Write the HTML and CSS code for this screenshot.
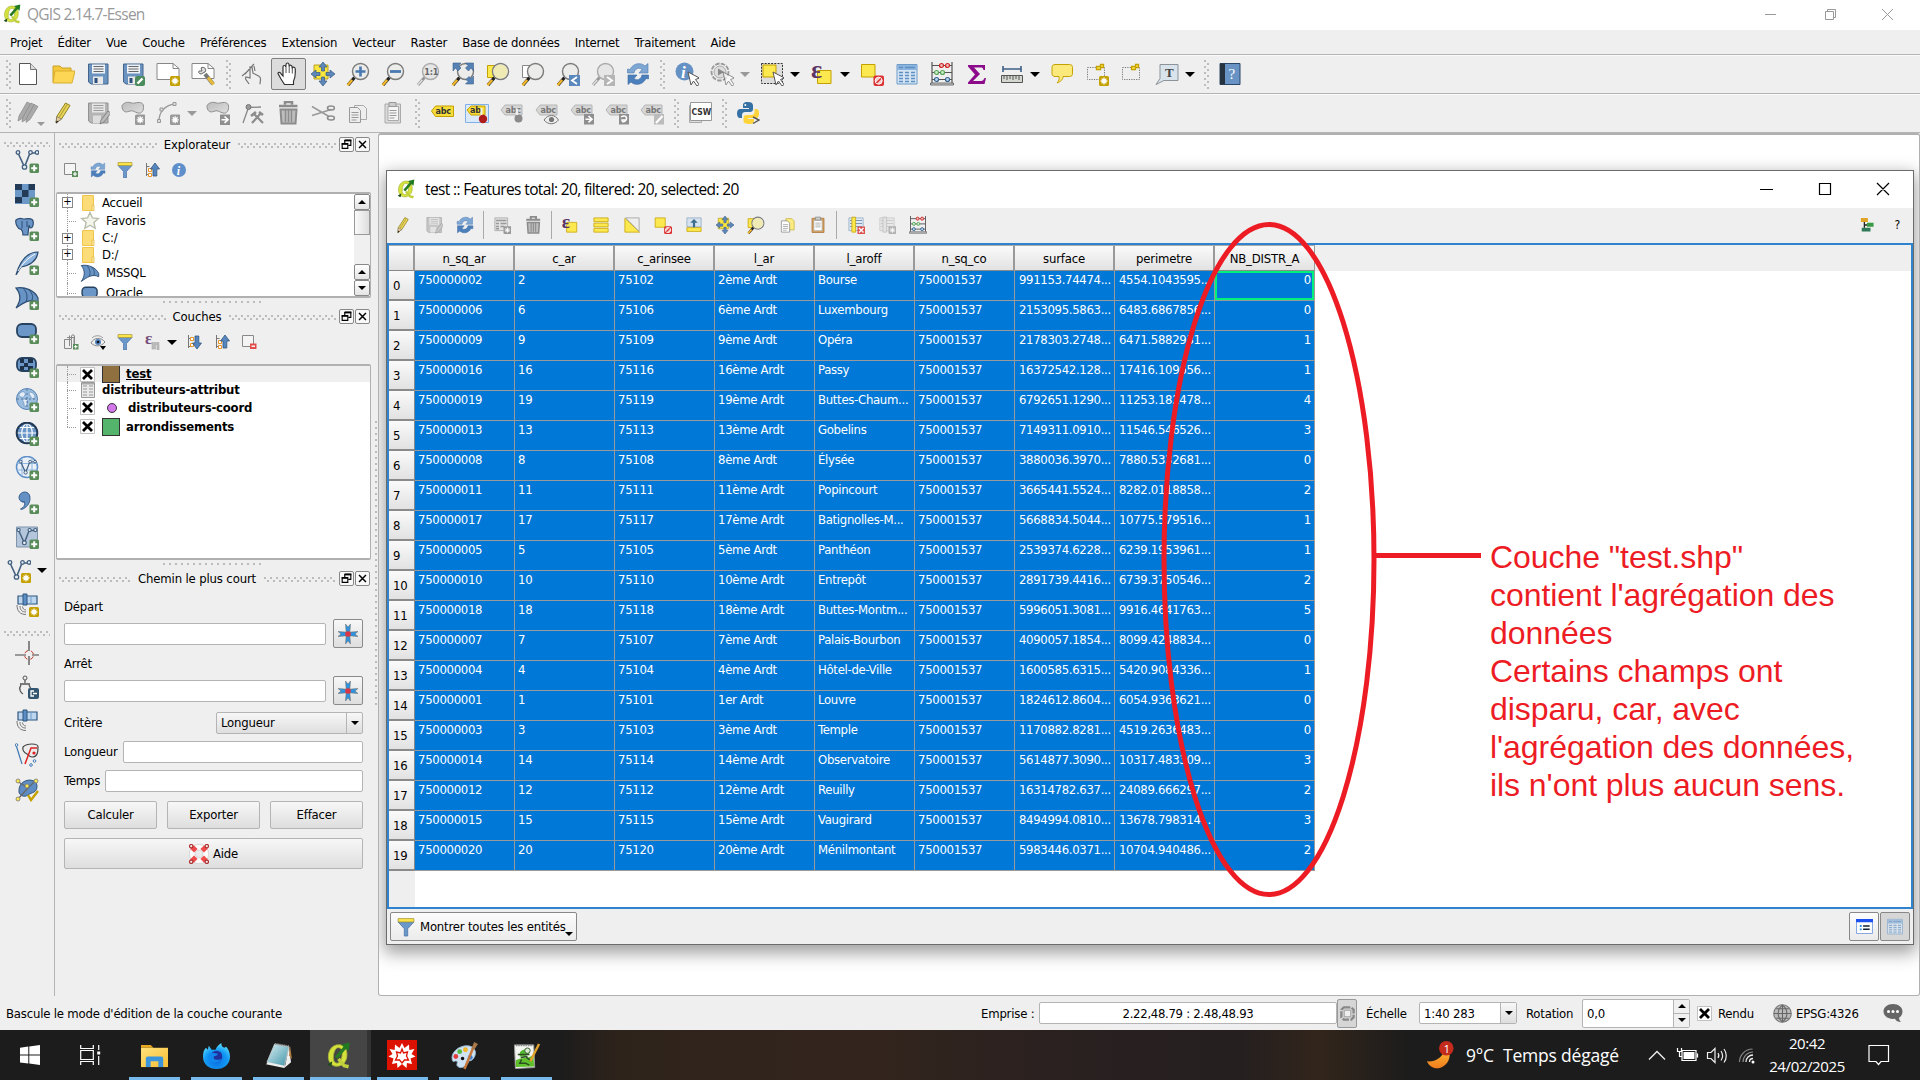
FILE: index.html
```html
<!DOCTYPE html>
<html lang="fr">
<head>
<meta charset="utf-8">
<title>QGIS 2.14.7-Essen</title>
<link rel="stylesheet" href="styles.css">
</head>
<body>
<svg class="defs" width="0" height="0">
<defs>
<linearGradient id="gGrey" x1="0" y1="0" x2="1" y2="1"><stop offset="0" stop-color="#bcbcbc"/><stop offset="1" stop-color="#dedede"/></linearGradient>
<linearGradient id="gMoon" x1="0" y1="0" x2="0" y2="1"><stop offset="0" stop-color="#ffc83d"/><stop offset="1" stop-color="#f07c1c"/></linearGradient>
<linearGradient id="gFold" x1="0" y1="0" x2="1" y2="1"><stop offset="0" stop-color="#ffe17a"/><stop offset="1" stop-color="#fbbf35"/></linearGradient>
<radialGradient id="gFox" cx=".5" cy=".7" r=".7"><stop offset="0" stop-color="#0b6fe0"/><stop offset=".6" stop-color="#139bf5"/><stop offset="1" stop-color="#5fe0ff"/></radialGradient>
<linearGradient id="gNote" x1="0" y1="0" x2="1" y2="1"><stop offset="0" stop-color="#d9f0f5"/><stop offset="1" stop-color="#3f93a6"/></linearGradient>
<g id="b-plus"><rect x="14.5" y="14.5" width="9.5" height="9.5" rx="1.5" fill="#5a8c5a"/><path d="M19.2 16.3v6M16.2 19.3h6" stroke="#fff" stroke-width="2"/></g>
<g id="b-new"><rect x="14" y="14" width="10" height="10" rx="1.5" fill="#c4a000"/><path d="M19 15.6v6.8M15.6 19h6.8M16.6 16.6l4.8 4.8M21.4 16.6l-4.8 4.8" stroke="#fff" stroke-width="1.3"/></g>
<g id="b-newg"><rect x="14" y="13.500" width="10.500" height="10.500" rx="1.500" fill="#999"/><path d="M19.200 15.300v7M15.700 18.800h7M16.700 16.300l5 5M21.700 16.300l-5 5" stroke="#fff" stroke-width="1.300"/></g>
<g id="b-no"><rect x="13.500" y="13.500" width="10.500" height="10.500" rx="2" fill="#dc3030"/><circle cx="18.700" cy="18.700" r="3.500" fill="#f4caca" stroke="#fff"/><path d="M16.500 21l4.500-4.500" stroke="#dc3030" stroke-width="1.500"/></g>
<g id="lens"><path d="M8.500 15.500L2 23" stroke="#222" stroke-width="3.200"/><path d="M6.200 18L1.500 23.200" stroke="#f3b92c" stroke-width="2.400"/><circle cx="14.500" cy="9.500" r="8" fill="#ececea" stroke="#7b7b7b" stroke-width="1.400"/></g>
<g id="lensg"><path d="M8.500 15.500L2 23" stroke="#999" stroke-width="3"/><path d="M6.200 18L1.700 23" stroke="#ddd" stroke-width="1.600"/><circle cx="14.500" cy="9.500" r="8" fill="#e6e6e6" stroke="#aaa" stroke-width="1.400"/></g>
<g id="tagg"><path d="M1 9l4-5h17v10H5z" fill="#d6d6d6" stroke="#b5b5b5"/><text x="5.500" y="12" class="abc" fill="#777">abc</text></g>
<g id="vee"><path d="M3 4l6.500 14L15 4h8" fill="none" stroke="#43607f" stroke-width="1.600"/><g fill="#e9eef4" stroke="#43607f" stroke-width="1.300"><circle cx="3" cy="3.500" r="1.800"/><circle cx="9.500" cy="18" r="2.200"/><circle cx="15.500" cy="3.500" r="1.800"/><circle cx="22" cy="3.500" r="1.800"/></g></g>
<g id="arrow"><path d="M13 10l3 13 2.500-4 3.500 5 2-1.500-3.500-5 4-1.500z" fill="#fff" stroke="#555"/></g>
<symbol id="qgis" viewBox="0 0 24 24"><path d="M13 2.500C6 2 3 8 3 13s3 8.500 7.500 8.500c5 0 9-4 9-10S17 3 13 2.500zM12 5c3 .3 3.500 3 3.200 7-.5 4-2 6.800-4.500 6.800C8 18.500 7 16 7.500 12 8 8 9.500 5 12 5z" fill="#d5e23c" stroke="#a9b43a" stroke-width=".8"/><path d="M12 15l5 6 4 1" stroke="#c2cf3c" stroke-width="3" fill="none"/><path d="M10 14L19 3.500" stroke="#2a7c22" stroke-width="3"/><path d="M14.500 2.500L22 .5l-1 7.500z" fill="#1f7a20"/><path d="M2 20l4.500-3-1 5z" fill="#1d4b1c"/></symbol>
<symbol id="file" viewBox="0 0 24 24"><path d="M3.500 1.500h11l6 6v15h-17z" fill="#fff" stroke="#555"/><path d="M14.500 1.500v6h6" fill="#ddd" stroke="#777"/></symbol>
<symbol id="open" viewBox="0 0 24 24"><path d="M2 20V4h7l2 2h9v4" fill="#f5c83c" stroke="#c9a024"/><path d="M2 21L4 9h20l-3 12z" fill="#fcd654" stroke="#d9ae30"/></symbol>
<symbol id="save" viewBox="0 0 24 24"><path d="M2.500 2h19.500v20H5l-2.500-2z" fill="#6b93c0" stroke="#44648c"/><path d="M6 2.500h13v9H6z" fill="#eef1f5"/><path d="M7.500 4.500h10M7.500 7h10M7.500 9.500h10" stroke="#666"/><path d="M7 14.500h10V22H7z" fill="#e8e8e8"/><path d="M8.500 16h3v5h-3z" fill="#2c4e7d"/></symbol>
<symbol id="saveas" viewBox="0 0 24 24"><use href="#save"/><rect x="14" y="14" width="10" height="10" rx="2" fill="#4c8c5c"/><path d="M16.500 21.500l5-5" stroke="#fff" stroke-width="2.400"/></symbol>
<symbol id="layout" viewBox="0 0 24 24"><path d="M1 1.500h16l6 5v11H1z" fill="#fff" stroke="#888"/><path d="M17 1.500v5h6" fill="none" stroke="#888"/><use href="#b-new"/></symbol>
<symbol id="layoutm" viewBox="0 0 24 24"><path d="M1 1.500h16l6 5v10H1z" fill="#fff" stroke="#888"/><path d="M17 1.500v5h6" fill="none" stroke="#888"/><path d="M10 6c3-2 6 1 4 4l-4 2c-2 0-3-2-2-3l3 0z" fill="#ddd" stroke="#666"/><path d="M14 12l8 10" stroke="#777" stroke-width="4"/><path d="M17 15.500l5.500 7" stroke="#e3b93d" stroke-width="3.200"/></symbol>
<symbol id="touch" viewBox="0 0 24 24"><path d="M8 22c-2-4-5-5-3-7l4 1V5l2 .2 1 6 6 3c3 2 1 4 1 8M4 12L13 2M1 14l6-5M13 4l1 5" fill="none" stroke="#777" stroke-width="1.200"/></symbol>
<symbol id="hand" viewBox="0 0 24 24"><path d="M8.500 22.500L5 17 2 11.500c0-2 2.500-1.500 3.500 1L7 14V5c0-2 2.500-2 2.800 0L10 2.500c.2-2 2.700-2 3 0l.2 2C14 2.500 16 3 16 5l.3 1c1-1.500 3-.8 3 1.200 0 6 .5 7.800-1.800 12v3.300z" fill="#fff" stroke="#333" stroke-width="1.200"/><path d="M10 5v6M13.200 4.500V11M16.300 6v5.500" stroke="#555"/></symbol>
<symbol id="panm" viewBox="0 0 24 24"><path d="M3 3h14v14H3z" fill="#fae63c" stroke="#b8a224"/><path d="M12 0l4 5h-2.500v4h-3V5H8zM12 24l4-5h-2.500v-4h-3v4H8zM0 12l5-4v2.500h4v3H5V16zM24 12l-5-4v2.500h-4v3h4V16z" fill="#5c88bb" stroke="#37597f" stroke-width=".7"/></symbol>
<symbol id="zin" viewBox="0 0 24 24"><use href="#lens"/><path d="M14.500 4.500v10M9.500 9.500h10" stroke="#4a78b0" stroke-width="2.600"/></symbol>
<symbol id="zout" viewBox="0 0 24 24"><use href="#lens"/><path d="M9 9.500h11" stroke="#4a78b0" stroke-width="2.800"/></symbol>
<symbol id="z11" viewBox="0 0 24 24"><use href="#lensg"/><text x="8.300" y="12.800" class="abc" fill="#666">1:1</text></symbol>
<symbol id="zfull" viewBox="0 0 24 24"><use href="#lens"/><path d="M2 1h8L7.500 3.500 10 6 7 9 4.500 6 2 9zM22.500 1h-8L17 3.500 14.500 6l3 3L20 6l2.500 3zM22.500 22h-8l2.500-2.500-2-2 3-3 2 2 2.500-2.500z" fill="#5581b5" stroke="#3e628e" stroke-width=".6"/></symbol>
<symbol id="zsel" viewBox="0 0 24 24"><path d="M1.500 3.500h12v12h-12z" fill="#fce94f" stroke="#c4a000"/><use href="#lens"/><circle cx="14.500" cy="9.500" r="7" fill="#efe9b4"/></symbol>
<symbol id="zlay" viewBox="0 0 24 24"><path d="M1.500 3.500h12v12h-12z" fill="#fff" stroke="#888"/><use href="#lens"/></symbol>
<symbol id="zlast" viewBox="0 0 24 24"><use href="#lens"/><path d="M13 13h11v11H13z" fill="#5b89bd"/><path d="M21 15l-5 3.500 5 3.500" stroke="#fff" stroke-width="1.800" fill="none"/></symbol>
<symbol id="znext" viewBox="0 0 24 24"><use href="#lensg"/><path d="M13 13h11v11H13z" fill="#b5b5b5"/><path d="M16 15l5 3.500-5 3.500" stroke="#fff" stroke-width="1.800" fill="none"/></symbol>
<symbol id="refresh" viewBox="0 0 24 24"><path d="M1.500 11V7l2.500.5C7 1 15 0 19 4l3-2.500V11h-9l3-3.500c-3-2.500-7-1-8 3.500z" fill="#7fa7d4" stroke="#4a78b0" stroke-width=".6"/><path d="M22.500 13v4l-2.500-.5C17 23 9 24 5 20l-3 2.500V13h9l-3 3.500c3 2.500 7 1 8-3.500z" fill="#4b80bd" stroke="#3a68a0" stroke-width=".6"/></symbol>
<symbol id="ident" viewBox="0 0 24 24"><circle cx="9.500" cy="9.500" r="9" fill="#6691c4"/><text x="6" y="16" class="ital" fill="#fff">i</text><use href="#arrow"/></symbol>
<symbol id="action" viewBox="0 0 24 24"><circle cx="10" cy="10" r="8.500" fill="none" stroke="#999" stroke-width="1.800" stroke-dasharray="4.500 1.300"/><circle cx="10" cy="10" r="6" fill="#ddd" stroke="#aaa"/><path d="M8 6.500l6 3.500-6 3.500z" fill="#888"/><g opacity=".6"><use href="#arrow"/></g></symbol>
<symbol id="select" viewBox="0 0 24 24"><path d="M1.500 1.500h21v20h-21z" fill="#ddd" stroke="#333" stroke-dasharray="2 1.200"/><path d="M3 3h13v12H3z" fill="#fce94f" stroke="#c4a000"/><use href="#arrow"/></symbol>
<symbol id="expr" viewBox="0 0 24 24"><path d="M7.500 8.500h13.500v13H7.500z" fill="#fce94f" stroke="#c4a000"/><text x="1" y="15.500" class="eps" fill="#5c3566">ε</text></symbol>
<symbol id="desel" viewBox="0 0 24 24"><path d="M1.500 2.500h13.500v12.500H1.500z" fill="#fce94f" stroke="#c4a000"/><use href="#b-no"/></symbol>
<symbol id="table" viewBox="0 0 24 24"><path d="M2 2.500h20v19.500H2z" fill="#d5e4f3" stroke="#6d9bc8"/><path d="M2 3h20v5H2z" fill="#8db4dc"/><path d="M4 10.500h4M10 10.500h4M16 10.500h4M4 13.500h4M10 13.500h4M16 13.500h4M4 16.500h4M10 16.500h4M16 16.500h4M4 19.500h4M10 19.500h4M16 19.500h4M4 5.500h4M10 5.500h10" stroke="#5c8fc4" stroke-width="1.300"/></symbol>
<symbol id="abacus" viewBox="0 0 24 24"><path d="M2 0v21M22 0v21M2 3.500h20M2 10.500h20M2 17.500h20" stroke="#555" stroke-width="1.200"/><path d="M.5 21h23v2H.5z" fill="#ccc" stroke="#555" stroke-width=".8"/><g stroke-width="1.200"><g fill="#f4b7b7" stroke="#c22"><circle cx="11.500" cy="3.500" r="2"/><circle cx="17.500" cy="3.500" r="2"/></g><g fill="#c9ecc9" stroke="#5aa35a"><circle cx="6.500" cy="10.500" r="2"/><circle cx="12.500" cy="10.500" r="2"/></g><g fill="#bdd7ef" stroke="#37648f"><circle cx="6.500" cy="17.500" r="2"/><circle cx="17.500" cy="17.500" r="2"/></g></g></symbol>
<symbol id="sigma" viewBox="0 0 24 24"><path d="M3 3h17v5h-1.500c-.5-2-1-2.500-3-2.500H9l6 6.500-7 7h8c2 0 2.500-1 3.500-3H21l-1.500 6H3v-1.500l7-8L3 4.500z" fill="#8b0b8b"/></symbol>
<symbol id="ruler" viewBox="0 0 24 24"><path d="M3 7h18M3 4v6M21 4v6" stroke="#3c5f85" stroke-width="1.600"/><path d="M1.500 13.500h21v7h-21z" fill="#d3d7cf" stroke="#555"/><path d="M4 14v3M7 14v4M10 14v3M13 14v4M16 14v3M19 14v4" stroke="#555"/></symbol>
<symbol id="tip" viewBox="0 0 24 24"><path d="M5 2.500h14.500c2 0 3 1 3 3v6c0 2-1 3-3 3H13c0 3-2 5-6 6.500 2-2 2.500-4 2-6.500H5c-2 0-3-1-3-3v-6c0-2 1-3 3-3z" fill="#fbe97c" stroke="#c4a000"/></symbol>
<symbol id="bm" viewBox="0 0 24 24"><path d="M2.500 5.500h17v12h-17z" fill="none" stroke="#777" stroke-dasharray="1.200 1.200"/><path d="M15.500 2.500h3v3h-3v2h-4v-3h4z" fill="#fce94f" stroke="#c4a000" stroke-width="1.300"/></symbol>
<symbol id="bmn" viewBox="0 0 24 24"><use href="#bm"/><use href="#b-new"/></symbol>
<symbol id="ttext" viewBox="0 0 24 24"><path d="M5 2.500h18v16H9L1 22.500l4-6z" fill="#d9e3ec" stroke="#8d9399"/><text x="10" y="15" class="tt" fill="#444">T</text></symbol>
<symbol id="help" viewBox="0 0 24 24"><path d="M2 1.500h20v21H2z" fill="#6893c4" stroke="#2a4668"/><path d="M2 1.500h5v21H2z" fill="#26333f"/><text x="10.500" y="17" class="qm" fill="#fff">?</text></symbol>
<symbol id="pencils" viewBox="0 0 24 24"><g fill="#aaa" stroke="#888" stroke-width=".7"><path d="M2 20l1-5L11 1l4 2-8 14z"/><path d="M6 21l1-5 8-14 4 2-8 14z"/><path d="M10 21.500l1-5 7-13 4 2-8 13z"/></g></symbol>
<symbol id="pencil" viewBox="0 0 24 24"><path d="M5 22l.8-6.500L14.500 2 19 4.500 10.500 18z" fill="#ead75a" stroke="#8d8124"/><path d="M8 16.500L16.500 3" stroke="#b8a53c" stroke-width="1.300"/><path d="M5 22l.8-6.500 4.700 2.500z" fill="#e9c99c" stroke="#666" stroke-width=".6"/><path d="M5 22.500l.5-3 2 1z" fill="#222"/></symbol>
<symbol id="saveg" viewBox="0 0 24 24"><path d="M2.500 2h19.500v20H5l-2.500-2z" fill="#b4b4b4" stroke="#929292"/><path d="M6 2.500h13v9H6z" fill="#e6e6e6"/><path d="M7.500 4.500h10M7.500 7h10M7.500 9.500h10" stroke="#999"/><path d="M7 14.500h8V22H7z" fill="#ddd"/><path d="M14 23l1-4 7-9 3 2-7 9z" fill="#bbb" stroke="#777" stroke-width=".8"/></symbol>
<symbol id="blob" viewBox="0 0 24 24"><path d="M4 2c4-2 6 1 10 0s8-1 8.500 3-1.500 8-5.500 7-5-3-8-2-6 2-7.500-2S2 3 4 2z" fill="url(#gGrey)" stroke="#8e8e8e"/></symbol>
<symbol id="addf" viewBox="0 0 24 24"><use href="#blob"/><use href="#b-newg"/></symbol>
<symbol id="movef" viewBox="0 0 24 24"><use href="#blob"/><path d="M14 13.500h10.500V24H14z" fill="#8f8f8f"/><path d="M15.500 18.700h6M18.500 15.500l3.500 3.200-3.500 3.200" stroke="#fff" stroke-width="1.600" fill="none"/></symbol>
<symbol id="curve" viewBox="0 0 24 24"><path d="M3 20C3 12 8 4 19 3" fill="none" stroke="#999" stroke-width="1.300"/><g fill="#ddd" stroke="#999"><path d="M1.500 18.500h3v3h-3zM4 7h3v3H4zM17 1.500h3v3h-3z"/></g><use href="#b-newg"/></symbol>
<symbol id="node" viewBox="0 0 24 24"><path d="M2 22L7.500 6.500 20 6" fill="none" stroke="#888" stroke-width="1.300"/><circle cx="7.500" cy="6" r="2.500" fill="#999" stroke="#777"/><path d="M11 22l9-10M13 13l9 9" stroke="#8c8c8c" stroke-width="2.200"/><path d="M10 15l5-4M18 11l4 3" stroke="#8c8c8c" stroke-width="2.600"/></symbol>
<symbol id="trash" viewBox="0 0 24 24"><path d="M9 3.500V1h7v2.500M3 5h18.500" stroke="#8c8c8c" stroke-width="2.600" fill="none"/><path d="M4.500 8.500h16l-1 14h-14z" fill="#bdbdbd" stroke="#8c8c8c" stroke-width="2"/><path d="M9.500 9v12M12.500 9v12M15.500 9v12" stroke="#8c8c8c" stroke-width="1.400"/></symbol>
<symbol id="cut" viewBox="0 0 24 24"><path d="M1 5.500l17 10M1 14.500l19-6" stroke="#999" stroke-width="1.500"/><ellipse cx="20" cy="7" rx="3.500" ry="2" fill="none" stroke="#8c8c8c" stroke-width="1.600"/><ellipse cx="20" cy="17" rx="3.500" ry="2" fill="none" stroke="#8c8c8c" stroke-width="1.600"/></symbol>
<symbol id="copy" viewBox="0 0 24 24"><path d="M8.500 4.500h9l3 3v11h-12z" fill="#eee" stroke="#aaa"/><path d="M3.500 6.500h8l3 3v12h-11z" fill="#eee" stroke="#999"/><path d="M5.500 11.500h7M5.500 14h7M5.500 16.500h7M5.500 19h5" stroke="#999"/></symbol>
<symbol id="paste" viewBox="0 0 24 24"><path d="M4 3h15.500v19H4z" fill="#dadada" stroke="#aaa"/><path d="M7 5.500h10.500v14H7z" fill="#f5f5f5" stroke="#aaa"/><path d="M8 1.500h7v4H8z" fill="#ccc" stroke="#999"/><path d="M8.500 9.500h7M8.500 12h7M8.500 14.500h7M8.500 17h5" stroke="#999"/></symbol>
<symbol id="abc" viewBox="0 0 24 24"><path d="M1.500 10l4-5h18v10.500h-18z" fill="#f6dd3a" stroke="#c4a000"/><text x="5.500" y="13.200" class="abc" fill="#333">abc</text></symbol>
<symbol id="abcp" viewBox="0 0 24 24"><path d="M.5 3.500h23v18H.5z" fill="#dce9f8" stroke="#7fb0ea"/><path d="M2 9l4-4h14v9H6z" fill="#f6dd3a" stroke="#c4a000"/><text x="5" y="12.200" class="abc" fill="#333">ab</text><path d="M16.500 7v8" stroke="#eee" stroke-width="2"/><circle cx="18" cy="18" r="4.200" fill="#b01c1c"/></symbol>
<symbol id="tag1" viewBox="0 0 24 24"><use href="#tagg"/><circle cx="18.500" cy="17.500" r="4" fill="#8b8b8b"/><path d="M17 8v6" stroke="#eee" stroke-width="2.500"/></symbol>
<symbol id="tag2" viewBox="0 0 24 24"><use href="#tagg"/><path d="M9 19c4-6 11-6 14.500 0-4 5-10.500 5-14.500 0z" fill="#eee" stroke="#777"/><circle cx="16.500" cy="18.500" r="2.600" fill="#777"/></symbol>
<symbol id="tag3" viewBox="0 0 24 24"><use href="#tagg"/><path d="M14 13h10.500v10.500H14z" fill="#8f8f8f"/><path d="M15.500 18.200h6M18.500 15l3.500 3.200-3.500 3.200" stroke="#fff" stroke-width="1.600" fill="none"/></symbol>
<symbol id="tag4" viewBox="0 0 24 24"><use href="#tagg"/><path d="M14 13h10.500v10.500H14z" fill="#8f8f8f"/><path d="M16 16c3-2 6-1 5.500 2S17 22 17 19h4" stroke="#fff" stroke-width="1.500" fill="none"/></symbol>
<symbol id="tag5" viewBox="0 0 24 24"><use href="#tagg"/><path d="M14 13h10.500v10.500H14z" fill="#bbb"/><path d="M16 22l6.500-7" stroke="#fff" stroke-width="2.200"/></symbol>
<symbol id="csw" viewBox="0 0 24 24"><path d="M1.500 4.500h12v17h-12z" fill="#ddd" stroke="#aaa"/><path d="M2.500 1.500h21v18h-21z" fill="#fff" stroke="#999"/><text x="3.500" y="13.500" class="csw" fill="#333">CSW</text></symbol>
<symbol id="python" viewBox="0 0 24 24"><path d="M12 1c-5 0-5 2-5 3.500V7h6v1H4.500C2 8 1 10 1 12.500S2 17 4 17h2v-3c0-2 1.500-3 3-3h5c2 0 3-1 3-3V4.500C17 2 15 1 12 1z" fill="#3671a5"/><path d="M13 23c5 0 5-2 5-3.500V18h-6v-1h8c3 0 3-2.500 3-5s-1-4-3-4h-1.500v3c0 2-1.500 3-3 3h-5c-2 0-3 1-3 3v3c0 2 2 3 5.500 3z" fill="#ffd43b"/><circle cx="9.300" cy="4" r="1" fill="#fff"/><path d="M17 16l6 3-6 3.500" fill="none" stroke="#555" stroke-width="1.400"/></symbol>
<symbol id="l-vec" viewBox="0 0 24 24"><use href="#vee"/><use href="#b-plus"/></symbol>
<symbol id="l-ras" viewBox="0 0 24 24"><path d="M0 1h20v20H0z" fill="#6c98c8"/><path d="M0 1h7v6H0zM13.500 1H20v6h-6.500zM7 7h6.500v7H7zM0 14h7v6H0z" fill="#243b57"/><use href="#b-plus"/></symbol>
<symbol id="l-pg" viewBox="0 0 24 24"><path d="M1 3c4-3 6-1 8-1s8-2 9 2-1 7-2 7-2-2-2-3c0 4-1 5-1 10H8c0-4-1-5-2-6C3 13 0 6 1 3z" fill="#6a95c6" stroke="#2d4d73" stroke-width="1.200"/><path d="M7 4v7M12 4v6" stroke="#2d4d73"/><use href="#b-plus"/></symbol>
<symbol id="l-fe" viewBox="0 0 24 24"><path d="M1 24C5 10 12 1 23 1c-1 8-6 13-17 15z" fill="#8fb5de" stroke="#2d4d73" stroke-width="1.200"/><path d="M3 20C8 12 13 7 20 3" stroke="#fff" fill="none"/><use href="#b-plus"/></symbol>
<symbol id="sail" viewBox="0 0 24 24"><path d="M1 2c9-2 19 3 22 10v4C15 12 8 17 1 22c5-7 5-14 0-20z" fill="#6793c5" stroke="#2d4d73" stroke-width="1.200"/><path d="M8 2c4 4 5 9 3 14M14 4c4 4 4 7 3 10" stroke="#2d4d73" fill="none"/></symbol>
<symbol id="l-ms" viewBox="0 0 24 24"><use href="#sail"/><use href="#b-plus"/></symbol>
<symbol id="pill" viewBox="0 0 24 24"><rect x="2" y="4" width="19" height="13" rx="5" fill="#6a96c8" stroke="#27425f" stroke-width="1.800"/></symbol>
<symbol id="l-or" viewBox="0 0 24 24"><use href="#pill"/><use href="#b-plus"/></symbol>
<symbol id="l-org" viewBox="0 0 24 24"><use href="#pill"/><path d="M5 5h4v4H5zM13 5h5v4h-5zM9 9h4v4H9zM5 12h4v4H5zM13 12h5v4h-5z" fill="#1f3149"/><use href="#b-plus"/></symbol>
<symbol id="globe" viewBox="0 0 24 24"><circle cx="12" cy="11" r="10.500" fill="#6a96c8" stroke="#27425f"/><path d="M12 .5v21M1.500 11h21M3.500 5.500h17M3.500 16.500h17M12 .5C5 6 5 16 12 21.500M12 .5c7 5.500 7 15.500 0 21" stroke="#fff" fill="none" stroke-width="1.200"/></symbol>
<symbol id="l-wms" viewBox="0 0 24 24"><circle cx="12" cy="11" r="10.500" fill="#9bbde0" stroke="#5683b5"/><path d="M5 5c4-3 6 0 5 2s-2 3-4 2-3-2-1-4zM9 11c4 0 4 2 3 5s-3 3-3 0-3-4 0-5zM15 4c3 0 5 3 5 5s-3 2-4 0-3-4-1-5z" fill="#e4edf6" stroke="#5683b5" stroke-width=".6"/><path d="M2 11h20M12 1v20" stroke="#41628c" stroke-width=".8" stroke-dasharray="2"/><use href="#b-plus"/></symbol>
<symbol id="l-wcs" viewBox="0 0 24 24"><use href="#globe"/><circle cx="12" cy="11" r="10.300" fill="none" stroke="#223a56" stroke-width="2"/><use href="#b-plus"/></symbol>
<symbol id="l-wfs" viewBox="0 0 24 24"><circle cx="12" cy="11" r="10.500" fill="#e9f0f8" stroke="#5d8fc9" stroke-width="1.500"/><path d="M1.500 7.500h21M1.500 14h21M7 2v18M17 2v18" stroke="#8fb4dd"/><g transform="translate(3.500 3) scale(.75)"><use href="#vee"/></g><use href="#b-plus"/></symbol>
<symbol id="l-csv" viewBox="0 0 24 24"><circle cx="9.500" cy="7.500" r="5.500" fill="#6490c4"/><path d="M5.500 19c4-2 4.500-4 4-7.500C6 12 4 10 4 7.500S6.500 2 9.500 2c4 0 5.500 3 5.500 6.500C15 14 11 18 6.500 19.500z" fill="#6490c4" stroke="#3b628f"/><use href="#b-plus"/></symbol>
<symbol id="l-vrt" viewBox="0 0 24 24"><path d="M1.500 2h21v20h-21z" fill="#b3c6dc" stroke="#7f93aa"/><g transform="translate(1 2) scale(.88)"><use href="#vee"/></g><use href="#b-plus"/></symbol>
<symbol id="l-newv" viewBox="0 0 24 24"><use href="#vee"/><use href="#b-new"/></symbol>
<symbol id="sat" viewBox="0 0 24 24"><path d="M3 3h19v8H3z" fill="#bdd6f0" stroke="#2f567f" stroke-width="1.200"/><path d="M16 3v8" stroke="#6f9cc9"/><path d="M8 1h4v11H8z" fill="#5c8dc4" stroke="#2f567f"/><path d="M2 12c0 6 3 9.500 9 9.500M5 13c0 4 2 6 6 6M7.500 13.500c0 2 1.500 3.500 3.500 3.500" fill="none" stroke="#777"/></symbol>
<symbol id="l-gps" viewBox="0 0 24 24"><use href="#sat"/><use href="#b-new"/></symbol>
<symbol id="l-cross" viewBox="0 0 24 24"><path d="M14 0v10M14 15v9M0 14h11M17 14h7" stroke="#444" stroke-width="1.200"/><circle cx="14" cy="14" r="4.500" fill="none" stroke="#c0392b" stroke-dasharray="4 3.070" stroke-dashoffset="-1.500"/></symbol>
<symbol id="l-gc" viewBox="0 0 24 24"><circle cx="10" cy="3" r="2" fill="#eee" stroke="#555"/><path d="M10 5v3M6 10c-3 4 0 8 2 9M14 10l2 4M5 9h10" fill="none" stroke="#555" stroke-width="1.300"/><rect x="13" y="13" width="11" height="11" rx="2" fill="#33556f"/><path d="M19 16h-3v5h3M22 18.500h-4" stroke="#fff" stroke-width="1.300" fill="none"/></symbol>
<symbol id="l-topo" viewBox="0 0 24 24"><path d="M1 2l6 19" stroke="#3f76b5" stroke-width="1.200"/><path d="M8 4c4-4 15-4 15 0s0 10-6 10c-3 0-3-2-5-3s-5-3-4-7z" fill="#ececec" stroke="#444" stroke-width="1.200"/><path d="M10 21l6-16h6" stroke="#d22" fill="none" stroke-width="1.500"/><circle cx="1.500" cy="2" r="1.300" fill="#fff" stroke="#3f76b5"/><circle cx="19" cy="10" r="1.600" fill="#d22"/><circle cx="16" cy="22" r="1.300" fill="#fff" stroke="#3f76b5"/><circle cx="19.500" cy="18" r="1.300" fill="#fff" stroke="#3f76b5"/></symbol>
<symbol id="l-chk" viewBox="0 0 24 24"><path d="M6 6C11 0 22 1 22 8s-5 6-9 9-9 0-9-3 0-5 2-8z" fill="#5f8dc3" stroke="#34587f"/><path d="M2 3l11 7 8-8M13 10L3 21" stroke="#666" stroke-width="1.200" fill="none"/><g fill="#fce94f" stroke="#777" stroke-width=".8"><circle cx="3" cy="3" r="2"/><circle cx="21" cy="3" r="2"/><circle cx="12" cy="8" r="2"/><circle cx="3" cy="21" r="2"/></g><path d="M13 17l3 5 7-9" stroke="#c4a000" stroke-width="2.400" fill="none"/></symbol>
<symbol id="d-add" viewBox="0 0 16 16"><path d="M1.500 1.500h11v11h-11z" fill="#f4f4f4" stroke="#888"/><path d="M9 9h6v6H9z" fill="#5a8c5a"/><path d="M12 10v4M10 12h4" stroke="#fff" stroke-width="1.200"/></symbol>
<symbol id="d-rem" viewBox="0 0 16 16"><path d="M1.500 1.500h11v11h-11z" fill="#f4f4f4" stroke="#888"/><path d="M9 9.500h6.500V15H9z" fill="#e24b4b"/><path d="M10.500 12.200h3.500" stroke="#fff" stroke-width="1.400"/></symbol>
<symbol id="funnel" viewBox="0 0 16 16"><path d="M1 3.500h14L9.500 9.500V16h-3V9.500z" fill="#6b98cb" stroke="#4a74a6" stroke-width=".7"/><path d="M1 .5h14v3H1z" fill="#fbe34a" stroke="#a99a3a" stroke-width=".7"/></symbol>
<symbol id="up" viewBox="0 0 16 16"><path d="M2.500 1v13M2.500 4.500h3M2.500 12.500h3" stroke="#777" fill="none"/><path d="M4.500 6.500h3v3h-3zM4.500 11.500h3v3h-3z" fill="#fff" stroke="#e9962a"/><path d="M11 1l4.500 6h-2.700v7H9V7H6.500z" fill="#5586bf" stroke="#35577f" stroke-width=".8"/></symbol>
<symbol id="down" viewBox="0 0 16 16"><path d="M2.500 1v13M2.500 4.500h3M2.500 12.500h3" stroke="#777" fill="none"/><path d="M4.500 3.500h3v3h-3zM4.500 9.500h3v3h-3z" fill="#fff" stroke="#e9962a"/><path d="M11 15l4.500-6h-2.700V2H9v7H6.500z" fill="#5586bf" stroke="#35577f" stroke-width=".8"/></symbol>
<symbol id="info" viewBox="0 0 16 16"><circle cx="8" cy="8" r="7" fill="#5f8fca"/><text x="5.800" y="12.500" class="itals" fill="#fff">i</text></symbol>
<symbol id="grp" viewBox="0 0 16 16"><path d="M1.500 5.500h7v9h-7zM4 3.500h7V13M6.500 1.500V12M8.500 5V2c0-1.500 3-1.500 3 0v8" fill="none" stroke="#888"/><path d="M10 10h5.500v5.500H10z" fill="#5a8c5a"/><path d="M12.700 11v3.500M11 12.700h3.500" stroke="#fff"/></symbol>
<symbol id="eye" viewBox="0 0 16 16"><path d="M1 9c3-6 10-6 14-1-4 5-10 5-14 1z" fill="#eee" stroke="#888"/><circle cx="8" cy="8" r="3" fill="#4f83bf"/><circle cx="8" cy="8" r="1.300" fill="#111"/><path d="M2 4c3-3 8-3 11 0" stroke="#999" fill="none"/><path d="M10 12h6l-3 4z" fill="#000"/></symbol>
<symbol id="epsf" viewBox="0 0 16 16"><text x="1" y="10" class="eps2" fill="#75507b">ε</text><path d="M8 8.500h7v2V16h-2v-5.500h-1.500V15H8z" fill="#bbb" stroke="#aaa" stroke-width=".6"/></symbol>
<symbol id="folder" viewBox="0 0 16 16"><path d="M2.500.5h11v15h-11z" fill="#fbdc79" stroke="#f0c54c"/><path d="M12 10h2v5.500h-2z" fill="#fff0b8" stroke="#e5b93c" stroke-width=".8"/></symbol>
<symbol id="star" viewBox="0 0 20 20"><path d="M10 1.500l2.600 5.800 6.200.6-4.700 4.200 1.400 6.200L10 15l-5.500 3.300 1.400-6.200L1.200 7.900l6.200-.6z" fill="#f4f5ec" stroke="#babdaa" stroke-width="1.500"/></symbol>
<symbol id="tab16" viewBox="0 0 16 16"><path d="M1.500.5h13v15h-13z" fill="#e9e9e9" stroke="#999"/><path d="M3 4h4M9 4h4M3 7h4M9 7h4M3 10h4M9 10h4M3 13h4M9 13h4" stroke="#999"/><path d="M2 1h12v1.500H2z" fill="#aaa"/></symbol>
<symbol id="float" viewBox="0 0 15 15"><path d="M5.500 2.500h7v6h-3M5.500 6V2.500" fill="none" stroke="#000" stroke-width="1.300"/><path d="M5 3h8" stroke="#000" stroke-width="1.800"/><path d="M2.500 6.500h6.500v5.500H2.500z" fill="#f8f8f8" stroke="#000" stroke-width="1.300"/><path d="M2 7h7" stroke="#000" stroke-width="1.600"/></symbol>
<symbol id="x" viewBox="0 0 15 15"><path d="M3.500 3.500l8 8M11.500 3.500l-8 8" stroke="#000" stroke-width="1.700"/></symbol>
<symbol id="chk" viewBox="0 0 15 15"><path d="M.5.5h14v14H.5z" fill="#fff" stroke="#c2c2c2"/><path d="M3 3l9 9M12 3l-9 9" stroke="#000" stroke-width="2.800"/></symbol>
<symbol id="pick" viewBox="0 0 20 20"><path d="M7.500 0L10 3l2.500-3-.8 10H8.300zM7.500 20l2.500-3 2.500 3-.8-10H8.300zM0 7.500L3 10l-3 2.500L10 11.700V8.300zM20 7.500L17 10l3 2.500-10-.8V8.300z" fill="#2e93dd" stroke="#777" stroke-width=".6"/><circle cx="10" cy="10" r="2.800" fill="#dc3545"/></symbol>
<symbol id="buoy" viewBox="0 0 20 20"><circle cx="10" cy="10" r="7" fill="none" stroke="#fbfbfb" stroke-width="5.500"/><circle cx="10" cy="10" r="9.700" fill="none" stroke="#c4c4c4" stroke-width=".6"/><circle cx="10" cy="10" r="4" fill="none" stroke="#ccc" stroke-width=".6"/><path d="M3 3l3.800 3.800M17 3l-3.800 3.800M3 17l3.800-3.800M17 17l-3.800-3.800" stroke="#ee4b4b" stroke-width="5"/><g fill="#eee" stroke="#b03030" stroke-width="1.200"><circle cx="2.200" cy="2.200" r="1.700"/><circle cx="17.800" cy="2.200" r="1.700"/><circle cx="2.200" cy="17.800" r="1.700"/><circle cx="17.800" cy="17.800" r="1.700"/></g></symbol>
<symbol id="a-new" viewBox="0 0 24 24"><path d="M2.500 2.500h17v17h-17z" fill="#e2e2e2" stroke="#a2a2a2"/><path d="M4 6h14M4 10h4M10 10h8M4 14h4M10 14h5M4 17h4" stroke="#999" stroke-width="1.800"/><use href="#b-newg"/></symbol>
<symbol id="a-all" viewBox="0 0 24 24"><path d="M2.500 2.500h19v5h-19zM2.500 9.500h19v5h-19zM2.500 16.500h19v5h-19z" fill="#fce94f" stroke="#c4a000"/></symbol>
<symbol id="a-inv" viewBox="0 0 24 24"><path d="M2.500 3v18.500H22z" fill="#fce94f" stroke="#c4a000"/><path d="M3.500 2.500h18v18z" fill="#eee" stroke="#999"/></symbol>
<symbol id="a-top" viewBox="0 0 24 24"><path d="M2.500 2.500h19v12h-19z" fill="#d5e2ef" stroke="#8da7c2"/><path d="M2.500 15.500h19v5h-19z" fill="#fce94f" stroke="#c4a000"/><path d="M12 4l5 5h-3.500v6h-3V9H7z" fill="#3c6d8f"/></symbol>
<symbol id="a-copy" viewBox="0 0 24 24"><path d="M10.500 3.500h8l3 3v12h-11z" fill="#fbeb80" stroke="#c4b040"/><path d="M4.500 6.500h8l3 3v12h-11z" fill="#fff" stroke="#888"/><path d="M6.500 11.500h7M6.500 14h7M6.500 16.500h7M6.500 19h5" stroke="#999"/></symbol>
<symbol id="a-paste" viewBox="0 0 24 24"><path d="M4 3h16v19H4z" fill="#d9a05b" stroke="#a8743a"/><path d="M6.500 5.500h11v14h-11z" fill="#fff" stroke="#aaa"/><path d="M8.500 1.500h7v4h-7z" fill="#ccc" stroke="#888"/><path d="M8.500 9.500h7M8.500 12h7M8.500 14.500h7" stroke="#999"/></symbol>
<symbol id="a-del" viewBox="0 0 24 24"><path d="M2.500 2.500h19v17h-19z" fill="#dfe9f3" stroke="#8da7c2"/><path d="M4 6h16M4 10h16M4 14h16" stroke="#7c98b8" stroke-width="1.500"/><path d="M6.500 1.500h5v20h-5z" fill="#fce94f" stroke="#c4a000"/><path d="M14 14h10v10H14z" fill="#dd5050"/><path d="M16 16l6 6M22 16l-6 6" stroke="#fff" stroke-width="1.800"/></symbol>
<symbol id="a-col" viewBox="0 0 24 24"><path d="M2.500 2.500h19v17h-19z" fill="#e6e6e6" stroke="#b2b2b2"/><path d="M4 6h16M4 10h16M4 14h16" stroke="#bbb" stroke-width="1.500"/><path d="M6.500 1.500h5v20h-5z" fill="#ddd" stroke="#aaa"/><use href="#b-newg"/></symbol>
<symbol id="a-tree" viewBox="0 0 16 16"><path d="M1 0h8v4.500H1z" fill="#e0a526"/><path d="M8 5.500h7.500V10H8z" fill="#3b9a44"/><path d="M2 11h10v4.500H2z" fill="#2e7a58"/><path d="M5 4.500V11M5 8h3" stroke="#222" stroke-width="1.500"/></symbol>
<symbol id="form" viewBox="0 0 18 16"><path d="M.5.500h17v15H.5z" fill="#fff" stroke="#7d9fe0"/><path d="M0 0h18v3.500H0z" fill="#1b4ff0"/><path d="M4 7.500h2M4 11h2" stroke="#2f8fe0" stroke-width="2"/><path d="M7.500 7.500h7M7.500 11h7" stroke="#123" stroke-width="1.700"/></symbol>
</defs>
</svg>

<header class="titlebar">
  <svg class="i20"><use href="#qgis"/></svg><span class="app-title">QGIS 2.14.7-Essen</span>
  <span class="winctl pale"><svg viewBox="0 0 130 20"><path d="M1 10.500h11M61.500 7.500h8v8h-8zM63.500 7.500v-2h8v8h-2M118 5l11 11M129 5l-11 11" fill="none" stroke="#999"/></svg></span>
</header>
<nav class="menubar"><span>Projet</span><span>Éditer</span><span>Vue</span><span>Couche</span><span>Préférences</span><span>Extension</span><span>Vecteur</span><span>Raster</span><span>Base de données</span><span>Internet</span><span>Traitement</span><span>Aide</span></nav>

<div class="toolbar">
  <i class="grip first"></i>
  <b><svg><use href="#file"/></svg></b><b><svg><use href="#open"/></svg></b><b><svg><use href="#save"/></svg></b><b><svg><use href="#saveas"/></svg></b><b><svg><use href="#layout"/></svg></b><b><svg><use href="#layoutm"/></svg></b>
  <i class="grip wide"></i>
  <b><svg><use href="#touch"/></svg></b><b class="on"><svg><use href="#hand"/></svg></b><b><svg><use href="#panm"/></svg></b><b><svg><use href="#zin"/></svg></b><b><svg><use href="#zout"/></svg></b><b><svg><use href="#z11"/></svg></b><b><svg><use href="#zfull"/></svg></b><b><svg><use href="#zsel"/></svg></b><b><svg><use href="#zlay"/></svg></b><b><svg><use href="#zlast"/></svg></b><b><svg><use href="#znext"/></svg></b><b><svg><use href="#refresh"/></svg></b>
  <i class="grip"></i>
  <b><svg><use href="#ident"/></svg></b><b><svg><use href="#action"/></svg></b><u class="dim"></u><b><svg><use href="#select"/></svg></b><u></u><b><svg><use href="#expr"/></svg></b><u></u><b><svg><use href="#desel"/></svg></b><b><svg><use href="#table"/></svg></b><b><svg><use href="#abacus"/></svg></b><b><svg><use href="#sigma"/></svg></b><b><svg><use href="#ruler"/></svg></b><u></u><b><svg><use href="#tip"/></svg></b><b><svg><use href="#bmn"/></svg></b><b><svg><use href="#bm"/></svg></b><b><svg><use href="#ttext"/></svg></b><u></u>
  <i class="grip"></i>
  <b><svg><use href="#help"/></svg></b>
</div>
<div class="toolbar second">
  <i class="grip first"></i>
  <b class="menu"><svg><use href="#pencils"/></svg></b><b><svg><use href="#pencil"/></svg></b><b><svg><use href="#saveg"/></svg></b><b><svg><use href="#addf"/></svg></b><b><svg><use href="#curve"/></svg></b><u class="dim"></u><b><svg><use href="#movef"/></svg></b><b><svg><use href="#node"/></svg></b><b><svg><use href="#trash"/></svg></b><b><svg><use href="#cut"/></svg></b><b><svg><use href="#copy"/></svg></b><b><svg><use href="#paste"/></svg></b>
  <i class="grip"></i>
  <b><svg><use href="#abc"/></svg></b><b><svg><use href="#abcp"/></svg></b><b><svg><use href="#tag1"/></svg></b><b><svg><use href="#tag2"/></svg></b><b><svg><use href="#tag3"/></svg></b><b><svg><use href="#tag4"/></svg></b><b><svg><use href="#tag5"/></svg></b>
  <i class="grip"></i>
  <b><svg><use href="#csw"/></svg></b>
  <i class="grip"></i>
  <b><svg><use href="#python"/></svg></b>
</div>

<main>
  <aside class="sidebar">
    <i class="hgrip"></i>
    <b><svg><use href="#l-vec"/></svg></b><b><svg><use href="#l-ras"/></svg></b><b><svg><use href="#l-pg"/></svg></b><b><svg><use href="#l-fe"/></svg></b><b><svg><use href="#l-ms"/></svg></b><b><svg><use href="#l-or"/></svg></b><b><svg><use href="#l-org"/></svg></b><b><svg><use href="#l-wms"/></svg></b><b><svg><use href="#l-wcs"/></svg></b><b><svg><use href="#l-wfs"/></svg></b><b><svg><use href="#l-csv"/></svg></b><b><svg><use href="#l-vrt"/></svg></b><b class="drop"><svg><use href="#l-newv"/></svg><u></u></b><b><svg><use href="#l-gps"/></svg></b>
    <i class="hgrip"></i>
    <b><svg><use href="#l-cross"/></svg></b><b><svg><use href="#l-gc"/></svg></b><b><svg><use href="#sat"/></svg></b><b><svg><use href="#l-topo"/></svg></b><b><svg><use href="#l-chk"/></svg></b>
  </aside>

  <section class="docks">
    <div class="dock-title"><i class="hgrip"></i><span>Explorateur</span><i class="hgrip"></i><em><svg><use href="#float"/></svg></em><em><svg><use href="#x"/></svg></em></div>
    <div class="dock-tools"><svg><use href="#d-add"/></svg><svg><use href="#refresh"/></svg><svg><use href="#funnel"/></svg><svg><use href="#up"/></svg><svg><use href="#info"/></svg></div>
    <div class="box browser">
      <ul class="tree">
        <li class="h17 exp"><svg><use href="#folder"/></svg><span>Accueil</span></li>
        <li class="h19 big"><svg><use href="#star"/></svg><span>Favoris</span></li>
        <li class="h16 exp"><svg><use href="#folder"/></svg><span>C:/</span></li>
        <li class="h17 exp"><svg><use href="#folder"/></svg><span>D:/</span></li>
        <li class="h20 big"><svg><use href="#sail"/></svg><span>MSSQL</span></li>
        <li class="h20 big"><svg><use href="#pill"/></svg><span>Oracle</span></li>
      </ul>
      <div class="scroll"><div class="sb up"></div><div class="thumb"></div><div class="track"></div><div class="sb up"></div><div class="sb"></div></div>
    </div>
    <div class="split"><i class="hgrip"></i></div>
    <div class="dock-title"><i class="hgrip"></i><span>Couches</span><i class="hgrip"></i><em><svg><use href="#float"/></svg></em><em><svg><use href="#x"/></svg></em></div>
    <div class="dock-tools"><svg><use href="#grp"/></svg><svg><use href="#eye"/></svg><svg><use href="#funnel"/></svg><svg><use href="#epsf"/></svg><u></u><svg><use href="#down"/></svg><svg><use href="#up"/></svg><svg><use href="#d-rem"/></svg></div>
    <div class="box layers">
      <ul class="tree">
        <li class="h16 hl"><svg class="chk"><use href="#chk"/></svg><s class="brown"></s><span class="cur">test</span></li>
        <li class="h16"><svg><use href="#tab16"/></svg><span>distributeurs-attribut</span></li>
        <li class="h19"><svg class="chk"><use href="#chk"/></svg><s class="dot"></s><span>distributeurs-coord</span></li>
        <li class="h19 last"><svg class="chk"><use href="#chk"/></svg><s class="green"></s><span>arrondissements</span></li>
      </ul>
    </div>
    <div class="split"><i class="hgrip"></i></div>
    <div class="dock-title"><i class="hgrip"></i><span>Chemin le plus court</span><i class="hgrip"></i><em><svg><use href="#float"/></svg></em><em><svg><use href="#x"/></svg></em></div>
    <form class="route">
      <label class="lbl">Départ</label>
      <div class="row tall"><div class="field"></div><div class="btn sq"><svg><use href="#pick"/></svg></div></div>
      <label class="lbl">Arrêt</label>
      <div class="row tall"><div class="field"></div><div class="btn sq"><svg><use href="#pick"/></svg></div></div>
      <div class="row"><label>Critère</label><div class="combo"><span>Longueur</span><u></u></div></div>
      <div class="row"><label>Longueur</label><div class="field"></div></div>
      <div class="row"><label>Temps</label><div class="field"></div></div>
      <div class="row acts"><div class="btn">Calculer</div><div class="btn">Exporter</div><div class="btn">Effacer</div></div>
      <div class="btn aide"><svg><use href="#buoy"/></svg>Aide</div>
    </form>
  </section>
  <i class="vgrip"></i>

  <section class="canvas">
    <div class="window">
      <div class="wtitle"><svg class="i20"><use href="#qgis"/></svg><span>test :: Features total: 20, filtered: 20, selected: 20</span>
        <span class="winctl"><svg viewBox="0 0 130 20"><path d="M0 10.500h13M59.500 4.500h11v11h-11zM117 4l12 12M129 4l-12 12" fill="none" stroke="#000" stroke-width="1.200"/></svg></span></div>
      <div class="wtools">
        <b><svg><use href="#pencil"/></svg></b><b class="fade"><svg><use href="#saveg"/></svg></b><b><svg><use href="#refresh"/></svg></b><hr>
        <b><svg><use href="#a-new"/></svg></b><b><svg><use href="#trash"/></svg></b><hr>
        <b><svg><use href="#expr"/></svg></b><b><svg><use href="#a-all"/></svg></b><b><svg><use href="#a-inv"/></svg></b><b><svg><use href="#desel"/></svg></b><b><svg><use href="#a-top"/></svg></b><b><svg><use href="#panm"/></svg></b><b><svg><use href="#zsel"/></svg></b><b><svg><use href="#a-copy"/></svg></b><b><svg><use href="#a-paste"/></svg></b><hr>
        <b><svg><use href="#a-del"/></svg></b><b class="fade"><svg><use href="#a-col"/></svg></b><b><svg><use href="#abacus"/></svg></b>
        <span class="right"><svg><use href="#a-tree"/></svg><span>?</span></span>
      </div>
      <div class="grid">
        <table>
          <thead><tr><th></th><th>n_sq_ar</th><th>c_ar</th><th>c_arinsee</th><th>l_ar</th><th>l_aroff</th><th>n_sq_co</th><th>surface</th><th>perimetre</th><th>NB_DISTR_A</th></tr></thead>
          <tbody>
          <tr><th>0</th><td>750000002</td><td>2</td><td>75102</td><td>2ème Ardt</td><td>Bourse</td><td>750001537</td><td>991153.74474...</td><td>4554.1043595...</td><td class="focus">0</td></tr>
          <tr><th>1</th><td>750000006</td><td>6</td><td>75106</td><td>6ème Ardt</td><td>Luxembourg</td><td>750001537</td><td>2153095.5863...</td><td>6483.6867856...</td><td>0</td></tr>
          <tr><th>2</th><td>750000009</td><td>9</td><td>75109</td><td>9ème Ardt</td><td>Opéra</td><td>750001537</td><td>2178303.2748...</td><td>6471.5882931...</td><td>1</td></tr>
          <tr><th>3</th><td>750000016</td><td>16</td><td>75116</td><td>16ème Ardt</td><td>Passy</td><td>750001537</td><td>16372542.128...</td><td>17416.109656...</td><td>1</td></tr>
          <tr><th>4</th><td>750000019</td><td>19</td><td>75119</td><td>19ème Ardt</td><td>Buttes-Chaum...</td><td>750001537</td><td>6792651.1290...</td><td>11253.182478...</td><td>4</td></tr>
          <tr><th>5</th><td>750000013</td><td>13</td><td>75113</td><td>13ème Ardt</td><td>Gobelins</td><td>750001537</td><td>7149311.0910...</td><td>11546.546526...</td><td>3</td></tr>
          <tr><th>6</th><td>750000008</td><td>8</td><td>75108</td><td>8ème Ardt</td><td>Élysée</td><td>750001537</td><td>3880036.3970...</td><td>7880.5332681...</td><td>0</td></tr>
          <tr><th>7</th><td>750000011</td><td>11</td><td>75111</td><td>11ème Ardt</td><td>Popincourt</td><td>750001537</td><td>3665441.5524...</td><td>8282.0118858...</td><td>2</td></tr>
          <tr><th>8</th><td>750000017</td><td>17</td><td>75117</td><td>17ème Ardt</td><td>Batignolles-M...</td><td>750001537</td><td>5668834.5044...</td><td>10775.579516...</td><td>1</td></tr>
          <tr><th>9</th><td>750000005</td><td>5</td><td>75105</td><td>5ème Ardt</td><td>Panthéon</td><td>750001537</td><td>2539374.6228...</td><td>6239.1953961...</td><td>1</td></tr>
          <tr><th>10</th><td>750000010</td><td>10</td><td>75110</td><td>10ème Ardt</td><td>Entrepôt</td><td>750001537</td><td>2891739.4416...</td><td>6739.3750546...</td><td>2</td></tr>
          <tr><th>11</th><td>750000018</td><td>18</td><td>75118</td><td>18ème Ardt</td><td>Buttes-Montm...</td><td>750001537</td><td>5996051.3081...</td><td>9916.4641763...</td><td>5</td></tr>
          <tr><th>12</th><td>750000007</td><td>7</td><td>75107</td><td>7ème Ardt</td><td>Palais-Bourbon</td><td>750001537</td><td>4090057.1854...</td><td>8099.4248834...</td><td>0</td></tr>
          <tr><th>13</th><td>750000004</td><td>4</td><td>75104</td><td>4ème Ardt</td><td>Hôtel-de-Ville</td><td>750001537</td><td>1600585.6315...</td><td>5420.9084336...</td><td>1</td></tr>
          <tr><th>14</th><td>750000001</td><td>1</td><td>75101</td><td>1er Ardt</td><td>Louvre</td><td>750001537</td><td>1824612.8604...</td><td>6054.9363621...</td><td>0</td></tr>
          <tr><th>15</th><td>750000003</td><td>3</td><td>75103</td><td>3ème Ardt</td><td>Temple</td><td>750001537</td><td>1170882.8281...</td><td>4519.2636483...</td><td>0</td></tr>
          <tr><th>16</th><td>750000014</td><td>14</td><td>75114</td><td>14ème Ardt</td><td>Observatoire</td><td>750001537</td><td>5614877.3090...</td><td>10317.483309...</td><td>3</td></tr>
          <tr><th>17</th><td>750000012</td><td>12</td><td>75112</td><td>12ème Ardt</td><td>Reuilly</td><td>750001537</td><td>16314782.637...</td><td>24089.666297...</td><td>2</td></tr>
          <tr><th>18</th><td>750000015</td><td>15</td><td>75115</td><td>15ème Ardt</td><td>Vaugirard</td><td>750001537</td><td>8494994.0810...</td><td>13678.798314...</td><td>3</td></tr>
          <tr><th>19</th><td>750000020</td><td>20</td><td>75120</td><td>20ème Ardt</td><td>Ménilmontant</td><td>750001537</td><td>5983446.0371...</td><td>10704.940486...</td><td>2</td></tr>
          </tbody>
        </table>
        <div class="headfill"></div>
      </div>
      <div class="wfoot">
        <div class="fbtn"><svg><use href="#funnel"/></svg><span>Montrer toutes les entités</span><u></u></div>
        <div class="views"><div class="fbtn v"><svg><use href="#form"/></svg></div><div class="fbtn v on"><svg class="t"><use href="#table"/></svg></div></div>
      </div>
    </div>
  </section>
</main>

<footer class="status">
  <span class="msg">Bascule le mode d'édition de la couche courante</span>
  <span class="emp">Emprise :</span><div class="field ext">2.22,48.79 : 2.48,48.93</div>
  <div class="fbtn tog"><svg viewBox="0 0 16 16"><path d="M4 1.500h8l2.500 2.500v8L12 14.500H4L1.500 12V4z" fill="none" stroke="#888" stroke-width="2.500" stroke-dasharray="7 1.500"/><path d="M4.500 4.500h7v7h-7z" fill="#eee" stroke="#999"/></svg></div>
  <span class="ech">Échelle</span><div class="combo scale"><span>1:40 283</span><u></u></div>
  <span class="rot">Rotation</span><div class="spin"><span>0,0</span><div><u class="up"></u><u></u></div></div>
  <svg class="rchk"><use href="#chk"/></svg><span class="ren">Rendu</span>
  <svg class="gl" viewBox="0 0 18 18"><circle cx="9" cy="9" r="8.300" fill="#bbb" stroke="#777"/><path d="M9 1v16M1 9h16M3 4.500h12M3 13.500h12M9 1C3.500 5 3.500 13 9 17M9 1c5.500 4 5.500 12 0 16" stroke="#666" fill="none"/></svg><span class="epsg">EPSG:4326</span>
  <svg class="bub" viewBox="0 0 20 20"><path d="M10 1c5.500 0 9.500 3.300 9.500 7.500 0 3-1.500 5-3.500 6.300 0 2 1 3.200 2 4.200-3 0-5-1-6-3.200C5 16.500.5 13 .5 8.500.5 4.300 4.500 1 10 1z" fill="#666"/><g fill="#fff"><circle cx="5.500" cy="8.500" r="1.500"/><circle cx="10" cy="8.500" r="1.500"/><circle cx="14.500" cy="8.500" r="1.500"/></g></svg>
</footer>

<footer class="taskbar">
  <div class="tk start"><svg viewBox="0 0 20 20"><path d="M0 2.800L8.300 1.600v8H0zM9.300 1.500L20 0v9.600H9.300zM0 10.600h8.300v8L0 17.400zM9.300 10.600H20V20L9.300 18.600z" fill="#fff"/></svg></div>
  <div class="tk start"><svg viewBox="0 0 20 20"><path d="M.7 0v3.500h12.600V0M.7 5.500h12.600v9H.7zM.7 20v-3.500h12.600V20M18.700 0v5M18.700 11v9" fill="none" stroke="#fff" stroke-width="1.200"/><path d="M17.200 6.500h3v3h-3z" fill="#fff"/></svg></div>
  <div class="tk run"><svg viewBox="0 0 28 28"><path d="M0 3h10l3 3h-13z" fill="#e8a81f"/><path d="M0 6h28v20H0z" fill="url(#gFold)"/><path d="M5 26V17c0-1 1-2 2-2h14c1 0 2 1 2 2v9h-5v-6h-8v6z" fill="#3a95dd"/></svg></div>
  <div class="tk run"><svg viewBox="0 0 28 28"><path d="M3 6l2 2 1-4 3 4 4 0c1-3 3-5 6-7 0 3 1 4 3 5l2-1c2 2 4 6 4 10 0 8-6 13-14 13S0 23 0 15c0-4 1-7 3-9z" fill="url(#gFox)"/><circle cx="14" cy="15" r="6" fill="#20309c"/><path d="M7 12c3-2 5 0 8 0 1 3-4 2-4 4s4 4 8 1c-1 5-11 6-13 1-1-2 0-5 1-6z" fill="#1188ee"/></svg></div>
  <div class="tk run"><svg viewBox="0 0 28 28"><path d="M10 2l15 3-5 20-18-4z" fill="url(#gNote)" stroke="#d0d7da" stroke-width=".8"/><path d="M3 21l-2 2 19 4 1-2zM25 5l2 16-7 6 1-3z" fill="#eef0f0"/><path d="M26 4l2 14-3-4z" fill="#b07a3c"/><path d="M10.500 2l15 2.500" stroke="#999" stroke-width="2" stroke-dasharray="1.200 1"/></svg></div>
  <div class="tk run active"><svg viewBox="0 0 24 24"><use href="#qgis"/></svg></div>
  <div class="tk run"><svg class="big" viewBox="0 0 30 30"><path d="M0 0h30v30H0z" fill="#dd1100"/><path d="M15 3l2.500 5L22 4.500l.3 5.500 5.200-1-3 5 4 2.500-5 2 1.500 5.500-5-1-.5 5-4.500-4-4.500 4-.5-5-5 1L6.500 18.500l-5-2 4-2.500-3-5 5.200 1L8 4.500 12.500 8z" fill="#fff"/><path d="M15 9l1.500 4 4-1-1 4 2 4h-4L15 23l-2.500-3h-4l2-4-1-4 4 1z" fill="none" stroke="#dd1100" stroke-width="1.300"/></svg></div>
  <div class="tk run"><svg viewBox="0 0 28 28"><path d="M2 20C-2 12 8 3 18 4c7 1 9 7 6 12s-5 2-6 5-6 7-10 5 0-5-2-6-3 1-4 0z" fill="#cfe3f2" stroke="#93b5cf"/><circle cx="5" cy="15" r="2.500" fill="#e23c3c"/><circle cx="9" cy="10" r="2.500" fill="#56b93f"/><circle cx="15" cy="8" r="2.500" fill="#f3b72b"/><circle cx="12" cy="17" r="1.800" fill="#111"/><circle cx="20" cy="16" r="2.500" fill="#3a83d6"/><path d="M14 28l9-22" stroke="#c8783a" stroke-width="2.500"/><path d="M21 7l3-7 4 2-4 6z" fill="#a87848"/></svg></div>
  <div class="tk run"><svg viewBox="0 0 28 28"><path d="M1.500 3h20l1 23.500-20 1z" fill="#f2f5f0" stroke="#999"/><path d="M3 26l0-7c6-4 12 0 18-6l1 12.500z" fill="#5fc02c"/><path d="M7 12c0-3 4-5 8-4l2 4-5 3-5 0z" fill="#56b830"/><circle cx="15" cy="9" r="2.800" fill="#d9ecd0" stroke="#3b5c33"/><path d="M5 13h12M8 16l7-1M9 18l-2 4 6 0 4 2M14 16l4 3" fill="none" stroke="#2c4c22" stroke-width="1.500"/><path d="M18 20l9-18" stroke="#e0a02c" stroke-width="2.500"/><path d="M3 3.500h18" stroke="#888" stroke-width="2" stroke-dasharray="1.500 1"/></svg></div>
  <div class="tray">
    <div class="moon"><svg viewBox="0 0 30 32"><path d="M20 4c6 7 6 16 0 21.500S5 31 1 22c9 1 19-5 19-18z" fill="url(#gMoon)"/><circle cx="21" cy="8.500" r="7.500" fill="#c42b1c"/><text x="18.200" y="13" class="one" fill="#fff">1</text></svg></div>
    <span class="temp">9°C</span><span class="sky">Temps dégagé</span>
    <svg class="sys" viewBox="0 0 110 22"><path d="M1 15.500l8-8 8 8" fill="none" stroke="#eee" stroke-width="1.400"/><path d="M34 6.500h14v10H34zM49.500 9.500v4" fill="none" stroke="#fff" stroke-width="1.200"/><path d="M35.500 8h11v7h-11z" fill="#fff"/><path d="M29.500 4v3.500h4V4M31.500 8v4.500H34" fill="none" stroke="#fff" stroke-width="1.200"/><path d="M59.500 8.500h3.500l4-4v14l-4-4h-3.500zM70 9c1 1.500 1 3.500 0 5M73 7c2 3 2 6.500 0 9.500M76 5c3 4 3 9.500 0 13.500" fill="none" stroke="#eee" stroke-width="1.200"/><circle cx="105" cy="18" r="1.500" fill="#fff"/><path d="M98 18c0-4 3-7 7-7M101.500 18c0-2 1.500-3.500 3.500-3.500" fill="none" stroke="#eee" stroke-width="1.300"/><path d="M91.500 18c0-7 6-13 13-13M95 18c0-5.500 4.500-10 10-10" fill="none" stroke="#888" stroke-width="1.200"/></svg>
    <div class="clock"><span>20:42</span><span>24/02/2025</span></div>
    <svg class="notif" viewBox="0 0 22 22"><path d="M1 1.500h19.500v16H13l-2.500 3-2.500-3H1z" fill="none" stroke="#fff" stroke-width="1.200"/></svg>
  </div>
</footer>

<div class="note">
  <svg viewBox="0 0 1920 1080"><ellipse cx="1269" cy="559.500" rx="105" ry="335" fill="none" stroke="#ed1c24" stroke-width="5"/><path d="M1374 555.500h107" stroke="#ed1c24" stroke-width="5"/></svg>
  <p>Couche "test.shp"<br>contient l'agrégation des<br>données<br>Certains champs ont<br>disparu, car, avec<br>l'agrégation des données,<br>ils n'ont plus aucun sens.</p>
</div>
</body>
</html>
```
FILE: styles.css
```css
* { box-sizing: border-box; }
html, body { margin: 0; width: 1920px; height: 1080px; overflow: hidden; }
body {
  display: flex; flex-direction: column; background: #efefef; color: #000;
  font: 13px/16px "DejaVu Sans Condensed", "DejaVu Sans", sans-serif;
  font-stretch: condensed; letter-spacing: -.2px; position: relative;
}
.defs { position: absolute; }
svg { display: block; flex: none; overflow: visible; }
i, em, b, u, s { font-style: normal; font-weight: normal; text-decoration: none; }
.abc { font: bold 9px "DejaVu Sans Condensed", sans-serif; letter-spacing: -.2px; }
.csw { font: bold 8.500px "DejaVu Sans Condensed", sans-serif; letter-spacing: 0; }
.ital { font: italic bold 17px "Liberation Serif", serif; }
.itals { font: italic bold 12px "Liberation Serif", serif; }
.eps { font: bold 26px "Liberation Serif", serif; }
.eps2 { font: bold 17px "Liberation Serif", serif; }
.tt { font: bold 13px "Liberation Serif", serif; }
.qm { font: 15px "Liberation Serif", serif; }
.one { font: 12px "Open Sans", sans-serif; }
.i20 { width: 20px; height: 20px; }

/* Title and menu */
.titlebar { height: 30px; background: #fff; display: flex; align-items: center; padding: 0 26px 2px 2px; }
.titlebar span:first-of-type { margin-left: 5px; }
.app-title { color: #999; font: 15.500px "Open Sans", sans-serif; letter-spacing: -.75px; }
.winctl { margin-left: auto; }
.winctl svg { width: 130px; height: 20px; }
.menubar { height: 24px; display: flex; gap: 15.100px; padding: 5px 0 0 10px; }
.menubar span { white-space: nowrap; }

/* Toolbars */
.toolbar { height: 39px; border-top: 1px solid #b4b4b4; box-shadow: inset 0 1px #fafafa; display: flex; align-items: center; }
.toolbar b { width: 35px; height: 32px; display: flex; align-items: center; justify-content: center; position: relative; }
.toolbar b svg { width: 24px; height: 24px; }
.toolbar b.on { border: 1px solid #7e7e7e; border-radius: 2px; background: #dcdcdc; }
.toolbar .menu::after { content: ""; position: absolute; right: 1px; bottom: 3px; border: 4px solid transparent; border-top-color: #999; border-bottom: 0; }
u { display: flex; align-items: center; justify-content: center; }
u::after { content: ""; border: 5px solid transparent; border-top-color: #000; border-bottom: 0; }
u.dim::after { border-top-color: #999; }
.toolbar u { width: 15px; padding-right: 3px; }
.grip { width: 13.300px; height: 30px; display: flex; justify-content: center; }
.grip.wide { width: 15px; }
.grip.first { width: 10.800px; padding-left: 5px; }
.grip::after { content: ""; width: 6px; height: 30px; flex: none; }
.grip::after, .hgrip, .vgrip {
  background-image: radial-gradient(circle at 2px 2px, #bcbcbc 1px, transparent 1.400px), radial-gradient(circle at 2px 2px, #bcbcbc 1px, transparent 1.400px);
  background-size: 6px 6px; background-position: 0 0, 3px 3px;
}
.hgrip { display: block; height: 6px; }

main { height: 864px; display: flex; border-top: 1px solid #b4b4b4; }
.sidebar { width: 55px; border-right: 1px solid #b4b4b4; padding-top: 8px; }
.sidebar .hgrip { margin: 0 4px 0 3px; }
.sidebar b { height: 34.150px; display: flex; align-items: center; justify-content: center; padding-right: 1px; }
.sidebar .hgrip + b { margin-top: -3px; }
.sidebar b + .hgrip { margin: 8px 4px 3px 3px; }
.sidebar b svg { width: 24px; height: 24px; }
.sidebar .drop { padding-left: 3px; }
.sidebar .drop u { width: 14px; margin-left: 4px; }

/* Docks */
.docks { width: 317px; display: flex; flex-direction: column; padding-right: 1px; }
.dock-title { height: 24px; display: flex; align-items: center; padding: 0 1px 0 3px; }
.dock-title .hgrip { flex: 1; }
.dock-title span { margin: 0 7px; letter-spacing: -.15px; }
.dock-title em { width: 15px; height: 15px; border: 1px solid #888; border-radius: 2px; background: #f8f8f8; margin: -2px 0 0 1px; }
.dock-title i + em { margin-left: 3px; }
.dock-title em svg { width: 13px; height: 13px; }
.dock-tools { height: 26px; display: flex; align-items: center; gap: 11.100px; padding-left: 8px; }
.dock-tools svg { width: 16px; height: 16px; }
.dock-tools u { margin: 0 -2px 0 -4px; }
.box { border: 1px solid #b0b0b0; border-width: 2px 1px; border-radius: 2px; background: #fff; margin: 9px 0 0 1px; display: flex; overflow: hidden; }
.browser { height: 106px; }
.layers { height: 196px; }
.tree { list-style: none; margin: 0; padding: 0 0 0 10px; flex: 1; }
.tree li { display: flex; align-items: center; padding-left: 13px; position: relative; flex: none; }
.tree li::before { content: ""; position: absolute; left: 0; top: 0; height: 100%; border-left: 1px dotted #999; }
.tree li::after { content: ""; position: absolute; left: 0; top: 50%; width: 9px; border-top: 1px dotted #999; }
.tree li.last::before { height: 50%; }
.tree li svg { width: 16px; height: 16px; }
.tree li span { margin-left: 6px; white-space: nowrap; }
.tree li.big svg { width: 20px; height: 19px; }
.browser .tree li.exp::after { content: "+"; left: -5px; top: 3px; width: 9px; height: 9px; border: 1px solid #888; background: #fff; font: 10px/7px "DejaVu Sans", sans-serif; text-align: center; letter-spacing: 0; }
.h16 { height: 16px; } .h17 { height: 17px; } .h19 { height: 19px; } .h20 { height: 20px; }
.layers .tree { font-weight: bold; letter-spacing: -.2px; }
.tree li .chk { width: 15px; height: 15px; }
.tree li.hl { margin-left: -10px; padding-left: 23px; background: #efefef; }
.tree li.hl::before, .tree li.hl::after { left: 10px; }
.tree s { width: 18px; height: 18px; margin-left: 7px; border: 1px solid #333; }
.brown { background: #91703f; } .green { background: #55b46c; }
.tree s.dot { width: 10px; height: 10px; border-radius: 50%; background: #d575ea; margin: 0 5px 0 12px; }
.tree .cur { text-decoration: underline; }
.scroll { width: 16px; display: flex; flex-direction: column; }
.sb { height: 16px; border: 1px solid #888; border-radius: 2px; background: linear-gradient(#fff, #e4e4e4); display: flex; align-items: center; justify-content: center; }
.sb::after, .spin u::after, .combo u::after { content: ""; border: 4px solid transparent; border-top-color: #000; border-bottom: 0; }
.sb.up::after, .spin .up::after { border: 4px solid transparent; border-bottom-color: #000; border-top: 0; }
.thumb { height: 25px; border: 1px solid #999; background: linear-gradient(90deg, #fafafa, #ddd); }
.track { flex: 1; background: #f0f0f0; }
.split { height: 7px; display: flex; justify-content: center; align-items: center; }
.split .hgrip { width: 103px; height: 3px; }
.vgrip { width: 4px; height: 285px; margin: 287px 0 0 2px; background-size: 6px 6px; background-position: 0 0, 9px 9px; }

.route { padding: 0 8px 0 9px; display: flex; flex-direction: column; }
.lbl { height: 28px; padding-top: 8px; }
.row { display: flex; height: 22px; margin-top: 7px; align-items: center; }
.row.tall { height: 29px; margin: 0; gap: 7px; }
.tall + .row { margin-top: 7px; }
.row label { margin-right: 5px; }
.field { background: #fff; border: 1px solid #b4b4b4; border-radius: 2px; height: 22px; flex: 1; }
.btn, .combo { background: linear-gradient(#f7f7f7, #dedede); border: 1px solid #b4b4b4; border-radius: 2px; display: flex; align-items: center; justify-content: center; }
.btn.sq { width: 30px; height: 29px; border-color: #8a8a8a; }
.btn.sq svg, .aide svg { width: 20px; height: 20px; }
.combo { width: 147px; height: 22px; margin-left: auto; padding-left: 4px; justify-content: flex-start; }
.combo u { margin-left: auto; width: 16px; height: 100%; border-left: 1px solid #b4b4b4; }
.row.acts { height: 28px; margin-top: 9px; gap: 10px; }
.acts .btn { flex: 1; height: 28px; }
.aide { height: 31px; margin-top: 9px; gap: 4px; }

/* Map canvas and attribute window */
.canvas { flex: 1; background: #fff; border: 1px solid #b0b0b0; border-width: 2px 1px 1px 1px; border-radius: 3px; position: relative; overflow: hidden; }
.window {
  position: absolute; left: 7px; top: 35px; width: 1528px; height: 775px; background: #efefef;
  border: 1px solid #6b6b6b; display: flex; flex-direction: column;
  box-shadow: 0 6px 16px 2px rgba(0, 0, 0, .38);
}
.wtitle { height: 37px; background: #fff; display: flex; align-items: center; padding: 0 23px 2px 9px; }
.wtitle > span:first-of-type { margin-left: 9px; font: 15.500px "Open Sans", sans-serif; letter-spacing: -.64px; }
.wtools { height: 35px; display: flex; align-items: center; padding-bottom: 2px; }
.wtools b { width: 31px; display: flex; justify-content: center; }
.wtools b svg { width: 18px; height: 18px; }
.wtools hr { width: 1px; height: 28px; border: 0; margin: 0 2.700px; background: #aaa; }
.fade { opacity: .7; }
.right { margin-left: auto; display: flex; align-items: center; gap: 20px; padding-right: 13px; font-size: 12px; }
.right svg { width: 14px; height: 16px; }
.grid { height: 666px; border: 2px solid #2e84cf; background: linear-gradient(90deg, #efefef 26px, #fff 26px); display: flex; align-items: flex-start; }
table { border-collapse: separate; border-spacing: 0; table-layout: fixed; width: 926px; }
th { font-weight: normal; padding: 0; background: linear-gradient(#fafafa, #e2e2e2); }
thead th { height: 26px; width: 100px; border-right: 2px solid #999; border-bottom: 1px solid #8a8a8a; border-top: 1px solid #aaa; line-height: 22px; padding-top: 2px; }
thead th:first-child { width: 26px; }
thead th:last-child { border-right-width: 1px; }
tbody th { border-right: 1px solid #888; border-bottom: 2px solid #8a8a8a; text-align: left; padding: 2px 0 0 4px; }
td { height: 30px; background: #0078d7; color: #fff; border: 0 solid #9a9a9a; border-width: 0 1px 1px 0; padding: 0 2px 0 3px; vertical-align: top; line-height: 17px; white-space: nowrap; overflow: hidden; letter-spacing: -.3px; }
td:nth-child(8), td:nth-child(9) { padding-left: 4px; letter-spacing: -.32px; }
td:last-child { text-align: right; padding-right: 3px; }
td.focus { box-shadow: inset 0 0 0 2px #00f07c; }
.headfill { flex: 1; height: 26px; background: #efefef; }
.wfoot { flex: 1; display: flex; align-items: flex-start; justify-content: space-between; padding: 3px 3px 0; }
.fbtn { height: 29px; border: 1px solid #888; border-radius: 2px; background: linear-gradient(#fcfcfc, #ebebeb); display: flex; align-items: center; padding: 0 3px 0 6px; }
.fbtn svg { width: 18px; height: 20px; margin-right: 5px; }
.fbtn u { align-self: flex-end; margin: 0 0 4px -1px; }
.fbtn u::after { border-width: 4px 4px 0; }
.views { display: flex; gap: 1px; }
.fbtn.v { width: 30px; padding: 0; justify-content: center; }
.fbtn.v svg { width: 17px; height: 15px; margin: 0; }
.fbtn.v .t { width: 18px; height: 19px; opacity: .7; }
.fbtn.on, .fbtn.tog { background: #d6d6d6; }

/* Status bar */
.status { height: 34px; display: flex; align-items: center; padding-left: 6px; white-space: nowrap; }
.status > span, .combo.scale span { padding-top: 2px; }
.msg { width: 975px; }
.emp { width: 58px; }
.field.ext { flex: none; width: 298px; text-align: center; line-height: 21px; letter-spacing: -.3px; }
.fbtn.tog { width: 20px; padding: 0; justify-content: center; border-color: #999; }
.tog svg { width: 15px; height: 15px; margin: 0; }
.ech { width: 53px; margin-left: 9px; }
.combo.scale { width: 98px; margin: 0; padding-left: 4px; background: #fff; }
.scale u { background: linear-gradient(#f7f7f7, #dedede); }
.rot { width: 56px; margin-left: 9px; }
.spin { width: 108px; height: 29px; border: 1px solid #b4b4b4; border-radius: 2px; background: #fff; display: flex; align-items: center; padding-left: 4px; }
.spin > span { padding-top: 2px; }
.spin > div { margin-left: auto; width: 16px; height: 100%; border-left: 1px solid #b4b4b4; background: #f0f0f0; display: flex; flex-direction: column; }
.spin u { flex: 1; }
.spin .up { border-bottom: 1px solid #b4b4b4; }
.rchk { width: 15px; height: 15px; margin: 0 6px 0 7px; }
.ren { width: 55px; }
.gl { width: 19px; height: 19px; }
.epsg { width: 87px; margin-left: 4px; }
.bub { width: 20px; height: 20px; }

/* Taskbar */
.taskbar { height: 50px; background: linear-gradient(90deg, #1c1c1c 560px, #2e231b 620px, #33251d 860px, #292020 1080px, #251f20 1240px, #32251b 1320px, #1c1c1c 1410px); display: flex; }
.tk { width: 62px; height: 50px; display: flex; align-items: center; justify-content: center; flex: none; }
.tk svg { width: 27px; height: 27px; }
.tk svg.big { width: 30px; height: 30px; }
.tk.start { width: 60px; }
.tk.start:nth-child(2) { width: 64px; padding-right: 4px; }
.tk.start svg { width: 20px; height: 20px; }
.tk.run { padding-right: 2px; background: linear-gradient(#76b9ed, #76b9ed) 5px 47px/51px 3px no-repeat; }
.tk.run.active { background: linear-gradient(#76b9ed, #76b9ed) 0 47px/61px 3px no-repeat, linear-gradient(90deg, #454545 57px, #333 57px, #333 61px, transparent 61px); padding-right: 5px; }
.tray { margin-left: auto; display: flex; align-items: center; color: #fff; font: 17.500px "Open Sans", sans-serif; letter-spacing: -.2px; height: 50px; }
.moon svg { width: 29px; height: 31px; }
.temp { margin-left: 11px; width: 37px; }
.sky { width: 145px; }
.sys { width: 110px; height: 22px; margin-right: 6px; }
.clock { width: 86px; text-align: center; font-size: 15px; line-height: 23px; letter-spacing: -.4px; display: flex; flex-direction: column; }
.notif { width: 22px; height: 22px; margin: 0 30px 0 18px; }

/* Annotation over the screen */
.note { position: absolute; inset: 0; }
.note svg { width: 1920px; height: 1080px; }
.note p { position: absolute; left: 1490px; top: 538px; margin: 0; color: #ed1c24; font: 32px/38px "Liberation Sans", sans-serif; letter-spacing: -.06px; white-space: nowrap; }
```
